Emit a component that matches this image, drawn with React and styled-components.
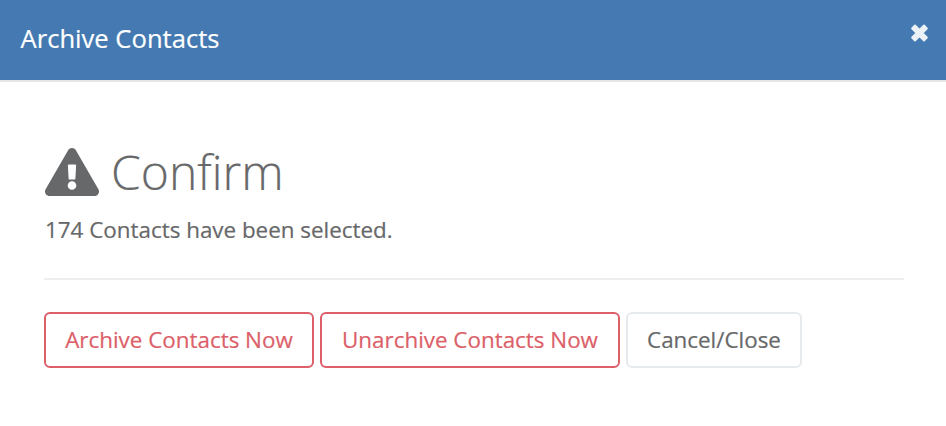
import React from 'react'
import styled, { createGlobalStyle } from 'styled-components'
import { FaExclamationTriangle } from 'react-icons/fa'


const GlobalStyle = createGlobalStyle`
    * {
        box-sizing: border-box;
    }

    body {
        margin: 0;
        background: #fff;
        font-family: 'Open Sans', sans-serif;
        color: #676869;
        -webkit-text-stroke: 0.2px;
    }
`

const Modal = styled.div`
    display: flex;
    flex-direction: column;
    height: 100vh;
    overflow: hidden;
    background: #fff;
`

const Header = styled.header`
    display: flex;
    justify-content: space-between;
    align-items: flex-start;
    height: 82px;
    padding: 20px 18px 0 20.5px;
    background: #4479b2;
    border-bottom: 2px solid #e5e5e5;
    color: #fff;
`

const Title = styled.h4`
    margin: 0;
    font-size: 25.6px;
    font-weight: 400;
    line-height: 38px;
`

const CloseButton = styled.button`
    display: flex;
    margin-top: 4px;
    padding: 0;
    border: 0;
    background: none;
    color: #ecf1f7;
`

const Body = styled.div`
    padding: 58px 42px 0 44px;
`

const Heading = styled.h1`
    display: flex;
    align-items: center;
    gap: 12px;
    margin: 0;
    height: 64px;
    padding-left: 1px;
    font-size: 48px;
    font-weight: 300;
    line-height: 64px;
`

const WarningIcon = styled(FaExclamationTriangle)`
    width: 54px;
    height: 48px;
`

const Message = styled.p`
    margin: 10px 0 0;
    padding-left: 1px;
    font-size: 22.4px;
    line-height: 32px;
`

const Divider = styled.hr`
    margin: 32px 0;
    border: 0;
    border-top: 2px solid #eee;
`

const Actions = styled.div`
    display: flex;
    gap: 6px;
`

const Button = styled.button`
    width: ${props => props.$width};
    height: 56px;
    padding: 0;
    border: 2px solid ${props => props.$danger ? '#dc5f69' : '#e7eaec'};
    border-radius: 6px;
    background: #fff;
    color: ${props => props.$danger ? '#dc5f69' : '#676869'};
    font-family: inherit;
    font-size: 22.4px;
    line-height: 34px;
    white-space: nowrap;
    -webkit-text-stroke: inherit;
`

const CloseIcon = () => (
    <svg width="17" height="18" viewBox="0 0 17 18" fill="currentColor" stroke="currentColor" strokeWidth="2" strokeLinejoin="round">
        <path d="M4 1.500L8.500 6 13 1.500 15.800 4.500 11.300 9l4.500 4.500L13 16.500 8.500 12 4 16.500 1.200 13.500 5.700 9 1.200 4.500z" />
    </svg>
)

const App = () => {
    return (
        <>
            <GlobalStyle />
            <Modal>
                <Header>
                    <Title>Archive Contacts</Title>
                    <CloseButton aria-label="Close"><CloseIcon /></CloseButton>
                </Header>
                <Body>
                    <Heading><WarningIcon />Confirm</Heading>
                    <Message>174 Contacts have been selected.</Message>
                    <Divider />
                    <Actions>
                        <Button $danger $width="270px">Archive Contacts Now</Button>
                        <Button $danger $width="300px">Unarchive Contacts Now</Button>
                        <Button $width="176px">Cancel/Close</Button>
                    </Actions>
                </Body>
            </Modal>
        </>
    )
}

export default App
